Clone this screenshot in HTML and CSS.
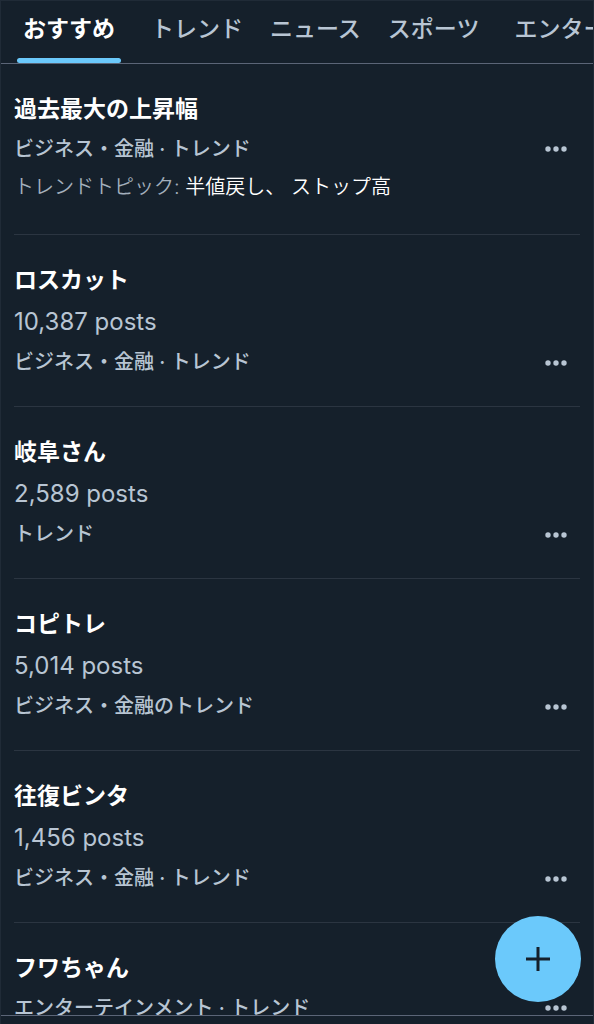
FILE: index.html
```
<!DOCTYPE html>
<html lang="ja">
<head>
  <meta charset="UTF-8">
  <meta name="viewport" content="width=device-width, initial-scale=1.0">
  <title>トレンド</title>
  <link rel="stylesheet" href="styles.css">
</head>
<body>
  <!-- 「もっと見る」アイコン -->
  <svg class="sprite" aria-hidden="true">
    <symbol id="dots" viewBox="0 0 24 24">
      <circle cx="4" cy="12" r="2.7"/>
      <circle cx="12" cy="12" r="2.7"/>
      <circle cx="20" cy="12" r="2.7"/>
    </symbol>
  </svg>

  <nav class="tabs">
    <a class="tab active" href="#">おすすめ</a>
    <a class="tab" href="#">トレンド</a>
    <a class="tab" href="#">ニュース</a>
    <a class="tab" href="#">スポーツ</a>
    <a class="tab tab-wide" href="#">エンター</a>
  </nav>

  <main class="trends">
    <article class="trend compact">
      <h2>過去最大の上昇幅</h2>
      <div class="meta">
        <span>ビジネス・金融 · トレンド</span>
        <button class="more" aria-label="もっと見る"><svg><use href="#dots"/></svg></button>
      </div>
      <p class="topics">トレンドトピック: <a href="#">半値戻し、</a> <a href="#">ストップ高</a></p>
    </article>

    <article class="trend">
      <h2>ロスカット</h2>
      <p class="posts">10,387 posts</p>
      <div class="meta">
        <span>ビジネス・金融 · トレンド</span>
        <button class="more" aria-label="もっと見る"><svg><use href="#dots"/></svg></button>
      </div>
    </article>

    <article class="trend">
      <h2>岐阜さん</h2>
      <p class="posts">2,589 posts</p>
      <div class="meta">
        <span>トレンド</span>
        <button class="more" aria-label="もっと見る"><svg><use href="#dots"/></svg></button>
      </div>
    </article>

    <article class="trend">
      <h2>コピトレ</h2>
      <p class="posts">5,014 posts</p>
      <div class="meta">
        <span>ビジネス・金融のトレンド</span>
        <button class="more" aria-label="もっと見る"><svg><use href="#dots"/></svg></button>
      </div>
    </article>

    <article class="trend">
      <h2>往復ビンタ</h2>
      <p class="posts">1,456 posts</p>
      <div class="meta">
        <span>ビジネス・金融 · トレンド</span>
        <button class="more" aria-label="もっと見る"><svg><use href="#dots"/></svg></button>
      </div>
    </article>

    <article class="trend compact">
      <h2>フワちゃん</h2>
      <div class="meta">
        <span>エンターテインメント · トレンド</span>
        <button class="more" aria-label="もっと見る"><svg><use href="#dots"/></svg></button>
      </div>
    </article>
  </main>

  <footer class="bottom-bar"></footer>

  <button class="compose" aria-label="ポストする">
    <svg viewBox="0 0 24 24"><path d="M12 0v24M0 12h24"/></svg>
  </button>
</body>
</html>
```
FILE: styles.css
```
* {
  box-sizing: border-box;
}

body {
  font-family: Inter, "Noto Sans CJK JP", sans-serif;
  background-color: #15202b;
  color: #b8c5d3;
  margin: 0;
  height: 100vh;
  display: flex;
  flex-direction: column;
  overflow: hidden;
  border: 1px solid #202b37;
  border-bottom: none;
}

a {
  color: inherit;
  text-decoration: none;
}

button {
  border: none;
  padding: 0;
  cursor: pointer;
}

.sprite {
  display: none;
}

.tabs {
  display: flex;
  flex: none;
  gap: 15px;
  height: 63px;
  padding-left: 16px;
  border-bottom: 1px solid #5b6577;
  overflow: hidden;
}

.tab {
  flex: none;
  padding: 0 6px;
  border-bottom: 5px solid transparent;
  font-size: 23px;
  font-weight: 500;
  line-height: 56px;
  white-space: nowrap;
}

.tab.active {
  position: relative;
  margin-right: 9px;
  color: #fff;
  font-weight: 700;
}

/* rounded underline of the selected tab */
.tab.active::after {
  content: "";
  position: absolute;
  left: 0;
  right: 0;
  bottom: -5px;
  height: 5px;
  border-radius: 3px;
  background-color: #6bc9fb;
}

.tab-wide {
  margin-left: 8px;
}

.trends {
  flex: 1;
  min-height: 0;
  overflow: hidden;
  padding: 0 13px;
}

.trend {
  padding: 25px 0 23px;
  border-bottom: 1px solid #2b3541;
}

.trend h2,
.trend p {
  margin: 0;
}

.trend h2 {
  color: #fff;
  font-size: 23px;
  font-weight: 700;
  line-height: 41px;
}

.posts {
  font-size: 24px;
  line-height: 41px;
}

.meta {
  display: flex;
  align-items: center;
  justify-content: space-between;
  font-size: 20px;
  font-weight: 500;
  line-height: 41px;
}

.compact {
  padding-bottom: 28px;
}

.compact .meta,
.topics {
  line-height: 38px;
}

.topics {
  color: #a3afbc;
  font-size: 20px;
  font-weight: 350;
}

.topics a {
  color: #fff;
}

.more {
  display: flex;
  margin-right: 12px;
  background: none;
  color: #b8c5d3;
}

.more svg {
  width: 24px;
  height: 24px;
  fill: currentColor;
}

.bottom-bar {
  flex: none;
  height: 9px;
  border-top: 1px solid #5b6577;
}

.compose {
  position: fixed;
  right: 13px;
  bottom: 22px;
  display: flex;
  align-items: center;
  justify-content: center;
  width: 86px;
  height: 86px;
  border-radius: 50%;
  background-color: #6bc9fb;
}

.compose svg {
  width: 24px;
  height: 24px;
  fill: none;
  stroke: #15202b;
  stroke-width: 3;
}
```
